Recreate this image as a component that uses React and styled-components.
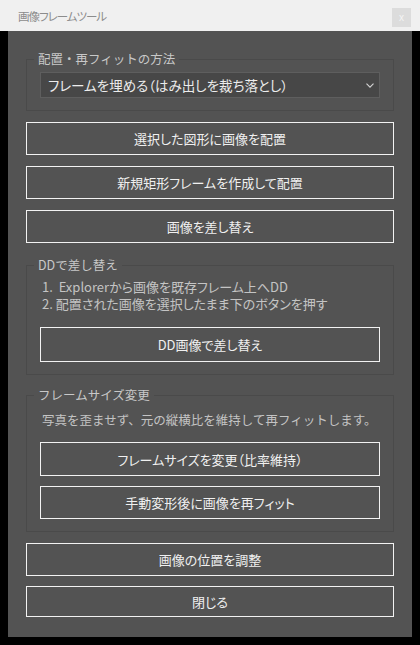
import React from 'react';
import styled, { createGlobalStyle } from "styled-components";

const GlobalStyle = createGlobalStyle`
  html, body {
    margin: 0;
    padding: 0;
    background: #000;
  }
  body {
    font-family: "Noto Sans CJK JP", "Noto Sans", sans-serif;
  }
  * {
    box-sizing: border-box;
  }
`;

export default function App() {
  return (
    <>
      <GlobalStyle />
      <Window>
        <TitleBar>
          <Title>画像フレームツール</Title>
          <CloseButton>x</CloseButton>
        </TitleBar>
        <Body>
          <Panel>
            <Group>
              <Legend>配置・再フィットの方法</Legend>
              <SelectBox role="combobox">
                <span>フレームを埋める（はみ出しを裁ち落とし）</span>
                <svg width="8" height="5" viewBox="0 0 8 5">
                  <path d="M0.5 0.6 L4 4.2 L7.5 0.6" fill="none" stroke="#d4d4d4" strokeWidth="1.1" />
                </svg>
              </SelectBox>
            </Group>

            <Button>選択した図形に画像を配置</Button>
            <Button>新規矩形フレームを作成して配置</Button>
            <Button>画像を差し替え</Button>

            <Group $top={3}>
              <Legend>DDで差し替え</Legend>
              <Steps>
                <li>1.&nbsp;&nbsp;Explorerから画像を既存フレーム上へDD</li>
                <li>2. 配置された画像を選択したまま下のボタンを押す</li>
              </Steps>
              <Button $inner $height={35} $top={15}>DD画像で差し替え</Button>
            </Group>

            <Group $top={1}>
              <Legend>フレームサイズ変更</Legend>
              <Note>写真を歪ませず、元の縦横比を維持して再フィットします。</Note>
              <Button $height={34} $top={14}>フレームサイズを変更（比率維持）</Button>
              <Button $top={10}>手動変形後に画像を再フィット</Button>
            </Group>

            <Button>画像の位置を調整</Button>
            <Button $height={31} $top={-1}>閉じる</Button>
          </Panel>
        </Body>
      </Window>
    </>
  );
}

const Window = styled.div`
  width: 420px;
  height: 645px;
  display: flex;
  flex-direction: column;
  background: #000;
`;

const TitleBar = styled.div`
  height: 31px;
  background: #f0f0f0;
  display: flex;
  align-items: center;
  justify-content: space-between;
  padding: 0 9px 0 18px;
`;

const Title = styled.div`
  font-size: 11.5px;
  color: #8c8c8c;
  font-feature-settings: "palt";
  letter-spacing: -1px;
`;

const CloseButton = styled.div`
  width: 19px;
  height: 19px;
  background: #dcdcdc;
  color: #f4f4f4;
  font-family: "Liberation Sans", sans-serif;
  font-size: 10px;
  display: flex;
  align-items: center;
  justify-content: center;
  margin-top: 4px;
`;

const Body = styled.div`
  flex: 1;
  padding: 0 8px 8px;
  display: flex;
`;

const Panel = styled.div`
  flex: 1;
  background: #535353;
  padding: 20px 18px 18px;
  display: flex;
  flex-direction: column;
  gap: 11px;
`;

const Group = styled.fieldset`
  margin: ${(p) => p.$top || 0}px 0 0;
  padding: 0 13px 12px;
  border: 1px solid #4a4a4a;
  display: flex;
  flex-direction: column;
  min-width: 0;
`;

const Legend = styled.legend`
  margin-left: -6px;
  padding: 0 4px;
  font-size: 12.5px;
  line-height: 16px;
  color: #c8c8c8;
`;

const SelectBox = styled.div`
  margin-top: 5px;
  height: 26px;
  background: #474747;
  border: 1px solid #5e5e5e;
  display: flex;
  align-items: center;
  justify-content: space-between;
  padding: 0 5px 0 7px;
  font-size: 13.5px;
  color: #ececec;
  font-feature-settings: "palt";
`;

const Steps = styled.ol`
  list-style: none;
  margin: 5px 0 0;
  padding: 0 0 0 2px;
  font-size: 13px;
  line-height: 17px;
  color: #c4c4c4;
  font-feature-settings: "palt";
`;

const Note = styled.p`
  margin: 9px 0 0;
  padding-left: 2px;
  font-size: 12.5px;
  line-height: 16px;
  color: #c4c4c4;
  white-space: nowrap;
`;

const Button = styled.div`
  flex: none;
  height: ${(p) => p.$height || 33}px;
  margin-top: ${(p) => p.$top || 0}px;
  border: 1.5px solid #f2f2f2;
  display: flex;
  align-items: center;
  justify-content: center;
  font-size: 13px;
  color: #f0f0f0;
  font-feature-settings: "palt";
`;
